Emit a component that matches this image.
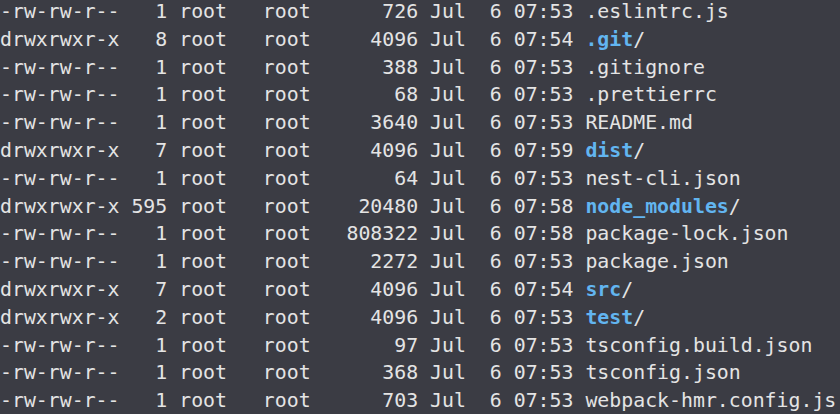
const rows: [string, string, string, string, string, boolean][] = [
  ["-rw-rw-r--", "1", "726", "07:53", ".eslintrc.js", false],
  ["drwxrwxr-x", "8", "4096", "07:54", ".git", true],
  ["-rw-rw-r--", "1", "388", "07:53", ".gitignore", false],
  ["-rw-rw-r--", "1", "68", "07:53", ".prettierrc", false],
  ["-rw-rw-r--", "1", "3640", "07:53", "README.md", false],
  ["drwxrwxr-x", "7", "4096", "07:59", "dist", true],
  ["-rw-rw-r--", "1", "64", "07:53", "nest-cli.json", false],
  ["drwxrwxr-x", "595", "20480", "07:58", "node_modules", true],
  ["-rw-rw-r--", "1", "808322", "07:58", "package-lock.json", false],
  ["-rw-rw-r--", "1", "2272", "07:53", "package.json", false],
  ["drwxrwxr-x", "7", "4096", "07:54", "src", true],
  ["drwxrwxr-x", "2", "4096", "07:53", "test", true],
  ["-rw-rw-r--", "1", "97", "07:53", "tsconfig.build.json", false],
  ["-rw-rw-r--", "1", "368", "07:53", "tsconfig.json", false],
  ["-rw-rw-r--", "1", "703", "07:53", "webpack-hmr.config.js", false],
]

export default function App() {
  return (
    <div className="w-[840px] h-[414px] overflow-hidden bg-[#3b3c44] text-[#e4e4e4]">
      <div
        className="mt-[-2px] text-[19.85px] leading-[27.8px] whitespace-pre"
        style={{ fontFamily: '"DejaVu Sans Mono", monospace' }}
      >
        {rows.map(([perm, links, size, time, name, dir]) => (
          <div key={name}>
            {`${perm} ${links.padStart(3)} root   root   ${size.padStart(6)} Jul  6 ${time} `}
            {dir ? (
              <>
                <span className="text-[#62b5f0] font-bold">{name}</span>/
              </>
            ) : (
              name
            )}
          </div>
        ))}
      </div>
    </div>
  )
}
